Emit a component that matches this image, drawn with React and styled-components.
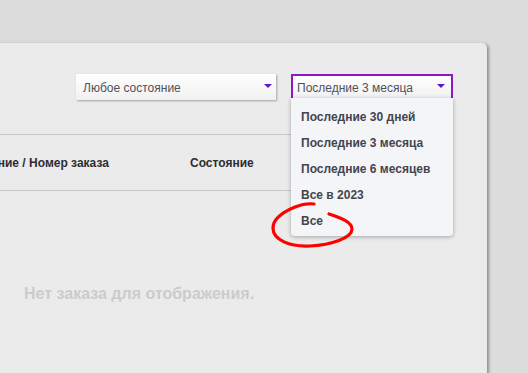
import React from 'react';
import styled, { createGlobalStyle } from 'styled-components';

const periods = [
    'Последние 30 дней',
    'Последние 3 месяца',
    'Последние 6 месяцев',
    'Все в 2023',
    'Все',
];

const GlobalStyle = createGlobalStyle`
    html, body {
        margin: 0;
        padding: 0;
        background: #dcdcdc;
        overflow: hidden;
        font-family: "Liberation Sans", Arial, sans-serif;
    }
`

const Page = styled.div`
    width: 528px;
    height: 373px;
    padding-top: 43px;
    box-sizing: border-box;
    position: relative;
    overflow: hidden;
`

const Panel = styled.div`
    margin-left: -110px;
    width: 597px;
    height: 400px;
    box-sizing: border-box;
    background: #ebebeb;
    border-radius: 5px;
    box-shadow: 2px 1px 3px rgba(0, 0, 0, 0.35);
    padding: 31px 34px 0 0;
`

const Toolbar = styled.div`
    display: flex;
    justify-content: flex-end;
    gap: 15px;
    height: 26px;
`

const SelectBox = styled.div`
    position: relative;
    width: ${props => props.width}px;
    height: 26px;
    box-sizing: border-box;
    display: flex;
    align-items: center;
    justify-content: space-between;
    padding: 1px ${props => props.active ? 5 : 3}px 0 ${props => props.active ? 4 : 7}px;
    background: linear-gradient(#ffffff, #f1f1f1);
    border: ${props => props.active ? '2px solid #8d17c7' : 'none'};
    box-shadow: ${props => props.active ? 'none' : '1px 1px 2px rgba(0, 0, 0, 0.3)'};
    font-size: 12px;
    color: #50505c;
`

const Arrow = styled.span`
    width: 0;
    height: 0;
    border-left: 4px solid transparent;
    border-right: 4px solid transparent;
    border-top: 4px solid #5a18c9;
    margin-right: 1px;
    margin-bottom: 3px;
`

const Menu = styled.ul`
    position: absolute;
    top: 100%;
    left: -2px;
    right: -2px;
    margin: 0;
    padding: 6px 0 2px 0;
    list-style: none;
    background: #f4f5f7;
    border-radius: 0 0 4px 4px;
    box-shadow: 0 1px 4px rgba(0, 0, 0, 0.3);
    z-index: 2;
`

const MenuItem = styled.li`
    height: 26px;
    line-height: 26px;
    padding-left: 10px;
    font-size: 12px;
    font-weight: bold;
    color: #444450;
`

const HeaderRow = styled.div`
    margin-top: 34px;
    height: 55px;
    border-top: 1px solid #c6c6c6;
    border-bottom: 1px solid #c6c6c6;
    display: grid;
    grid-template-columns: 259px 1fr;
    align-items: center;
    padding-left: 41px;
`

const HeaderCell = styled.div`
    font-size: 12px;
    font-weight: bold;
    color: #2d2d33;
    white-space: nowrap;
`

const Empty = styled.p`
    margin: 94px 0 0 134px;
    font-size: 16px;
    font-weight: bold;
    color: #cbcbcb;
`

const Scribble = styled.svg`
    position: absolute;
    left: 0;
    top: 0;
    pointer-events: none;
    z-index: 3;
`

const App = () => {
    return (
        <Page>
            <GlobalStyle />
            <Panel>
                <Toolbar>
                    <SelectBox width={200}>
                        Любое состояние
                        <Arrow />
                    </SelectBox>
                    <SelectBox width={162} active>
                        Последние 3 месяца
                        <Arrow />
                        <Menu>
                            {periods.map(p => <MenuItem key={p}>{p}</MenuItem>)}
                        </Menu>
                    </SelectBox>
                </Toolbar>
                <HeaderRow>
                    <HeaderCell>Наименование / Номер заказа</HeaderCell>
                    <HeaderCell>Состояние</HeaderCell>
                </HeaderRow>
                <Empty>Нет заказа для отображения.</Empty>
            </Panel>
            <Scribble width="528" height="373">
                <path
                    d="M314 204 C306 203, 300 205, 295 207 C283 212, 273 219, 273 228 C273 240, 290 247, 310 246 C331 245, 352 238, 352 229 C352 222, 341 218, 329 214"
                    fill="none"
                    stroke="#ff0000"
                    strokeWidth="3.2"
                    strokeLinecap="round"
                />
            </Scribble>
        </Page>
    )
}

export default App
